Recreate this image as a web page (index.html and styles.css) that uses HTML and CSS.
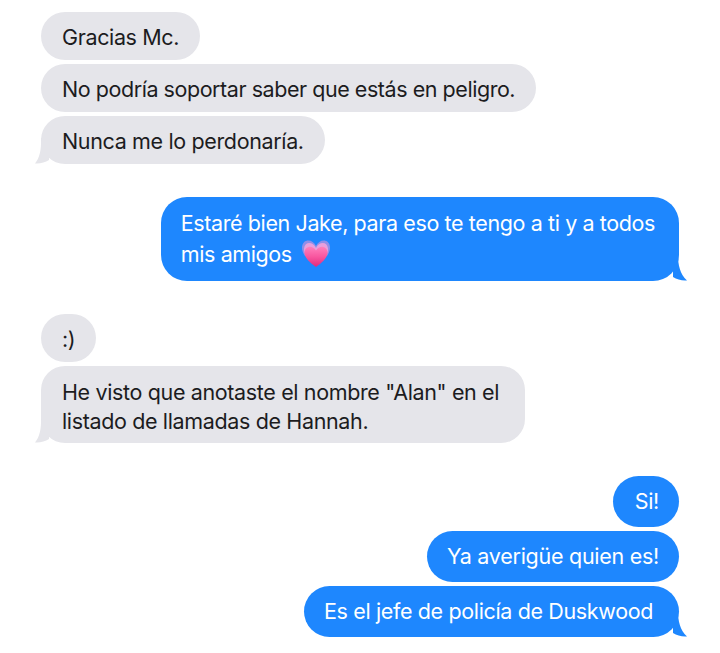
FILE: index.html
```html
<!DOCTYPE html>
<html lang="es">
<head>
<meta charset="utf-8">
<title>Mensajes</title>
<link rel="stylesheet" href="styles.css">
</head>
<body>
<main class="chat">
  <section class="group in">
    <p class="bubble">Gracias Mc.</p>
    <p class="bubble tight">No podría soportar saber que estás en peligro.</p>
    <p class="bubble tail">Nunca me lo perdonaría.<svg class="tail-icon" viewBox="0 0 14 26"><path d="M6 0C6.500 12 4.500 20 0 25.500C5 26 10 24.500 14 22L14 0Z"/></svg></p>
  </section>
  <section class="group out first-out">
    <p class="bubble tail wide">Estaré bien Jake, para eso te tengo a ti y a todos<br>mis amigos <svg class="heart" viewBox="0 0 32 32"><defs><linearGradient id="h" x1="0" y1="0" x2="0" y2="1"><stop offset="0" stop-color="#ff80bd"/><stop offset="0.5" stop-color="#f8569f"/><stop offset="1" stop-color="#e02a7c"/></linearGradient></defs><path d="M16 8C13 1 3 0 2 9C1.800 12 3 15 5 18L27 18C29 15 30.200 12 30 9C29 0 19 1 16 8Z" fill="#8f8fe8"/><path d="M16 10C13 3.500 5 3 4 10.500C3.800 13 5 16 6 18L26 18C27 16 28.200 13 28 10.500C27 3 19 3.500 16 10Z" fill="#e8a0dc"/><path d="M16 29C9 24 4.500 19.500 4.500 14.500C4.800 8 12.500 6.500 16 12.500C19.500 6.500 27.200 8 27.500 14.500C27.500 19.500 23 24 16 29Z" fill="url(#h)"/></svg><svg class="tail-icon" viewBox="0 0 14 26"><path d="M5 0C5 10 7 19 14 25.500C9 26 4 24.500 0 22L0 0Z"/></svg></p>
  </section>
  <section class="group in second-in">
    <p class="bubble">:)</p>
    <p class="bubble tail two">He visto que anotaste el nombre "Alan" en el<br>listado de llamadas de Hannah.<svg class="tail-icon" viewBox="0 0 14 26"><path d="M6 0C6.500 12 4.500 20 0 25.500C5 26 10 24.500 14 22L14 0Z"/></svg></p>
  </section>
  <section class="group out second-out">
    <p class="bubble tall loose short">Si!</p>
    <p class="bubble tall loose">Ya averigüe quien es!</p>
    <p class="bubble tall tail">Es el jefe de policía de Duskwood<svg class="tail-icon" viewBox="0 0 14 26"><path d="M5 0C5 10 7 19 14 25.500C9 26 4 24.500 0 22L0 0Z"/></svg></p>
  </section>
</main>
</body>
</html>
```
FILE: styles.css
```css
* { box-sizing: border-box; }
html, body { margin: 0; background: #fff; }
body { width: 720px; height: 653px; overflow: hidden; font-family: Inter, "Liberation Sans", sans-serif; }
.chat { display: flex; flex-direction: column; padding: 12px 41px 0; }
.group { display: flex; flex-direction: column; gap: 4px; }
.in { align-items: flex-start; }
.out { align-items: flex-end; }
.first-out { margin-top: 33px; }
.second-in { margin-top: 33px; }
.second-out { margin-top: 33px; }
.bubble { position: relative; margin: 0; padding: 10px 21px 8px; font-size: 21.5px; line-height: 30px; letter-spacing: -0.36px; border-radius: 24px; white-space: nowrap; }
.tight { letter-spacing: -0.45px; }
.loose { letter-spacing: -0.27px; }
.in .bubble { background: #e5e5ea; color: #1c1c1e; }
.out .bubble { background: #1e87fe; color: #fff; }
.in .two { padding: 12px 26px 8px 21px; line-height: 28.500px; }
.out .tall { padding: 10px 20px 11px; border-radius: 26px; }
.out .short { padding-left: 22px; }
.out .tail { padding-right: 26px; }
.out .wide { padding: 11px 24px 11px 20px; line-height: 31px; letter-spacing: -0.39px; border-radius: 26px; }
.tail-icon { position: absolute; bottom: 0; width: 14px; height: 26px; }
.in .tail-icon { left: -6px; fill: #e5e5ea; }
.out .tail-icon { right: -8px; fill: #1e87fe; }
.heart { width: 32px; height: 32px; margin: -6px 0 -6px 3px; vertical-align: -2px; }
```
